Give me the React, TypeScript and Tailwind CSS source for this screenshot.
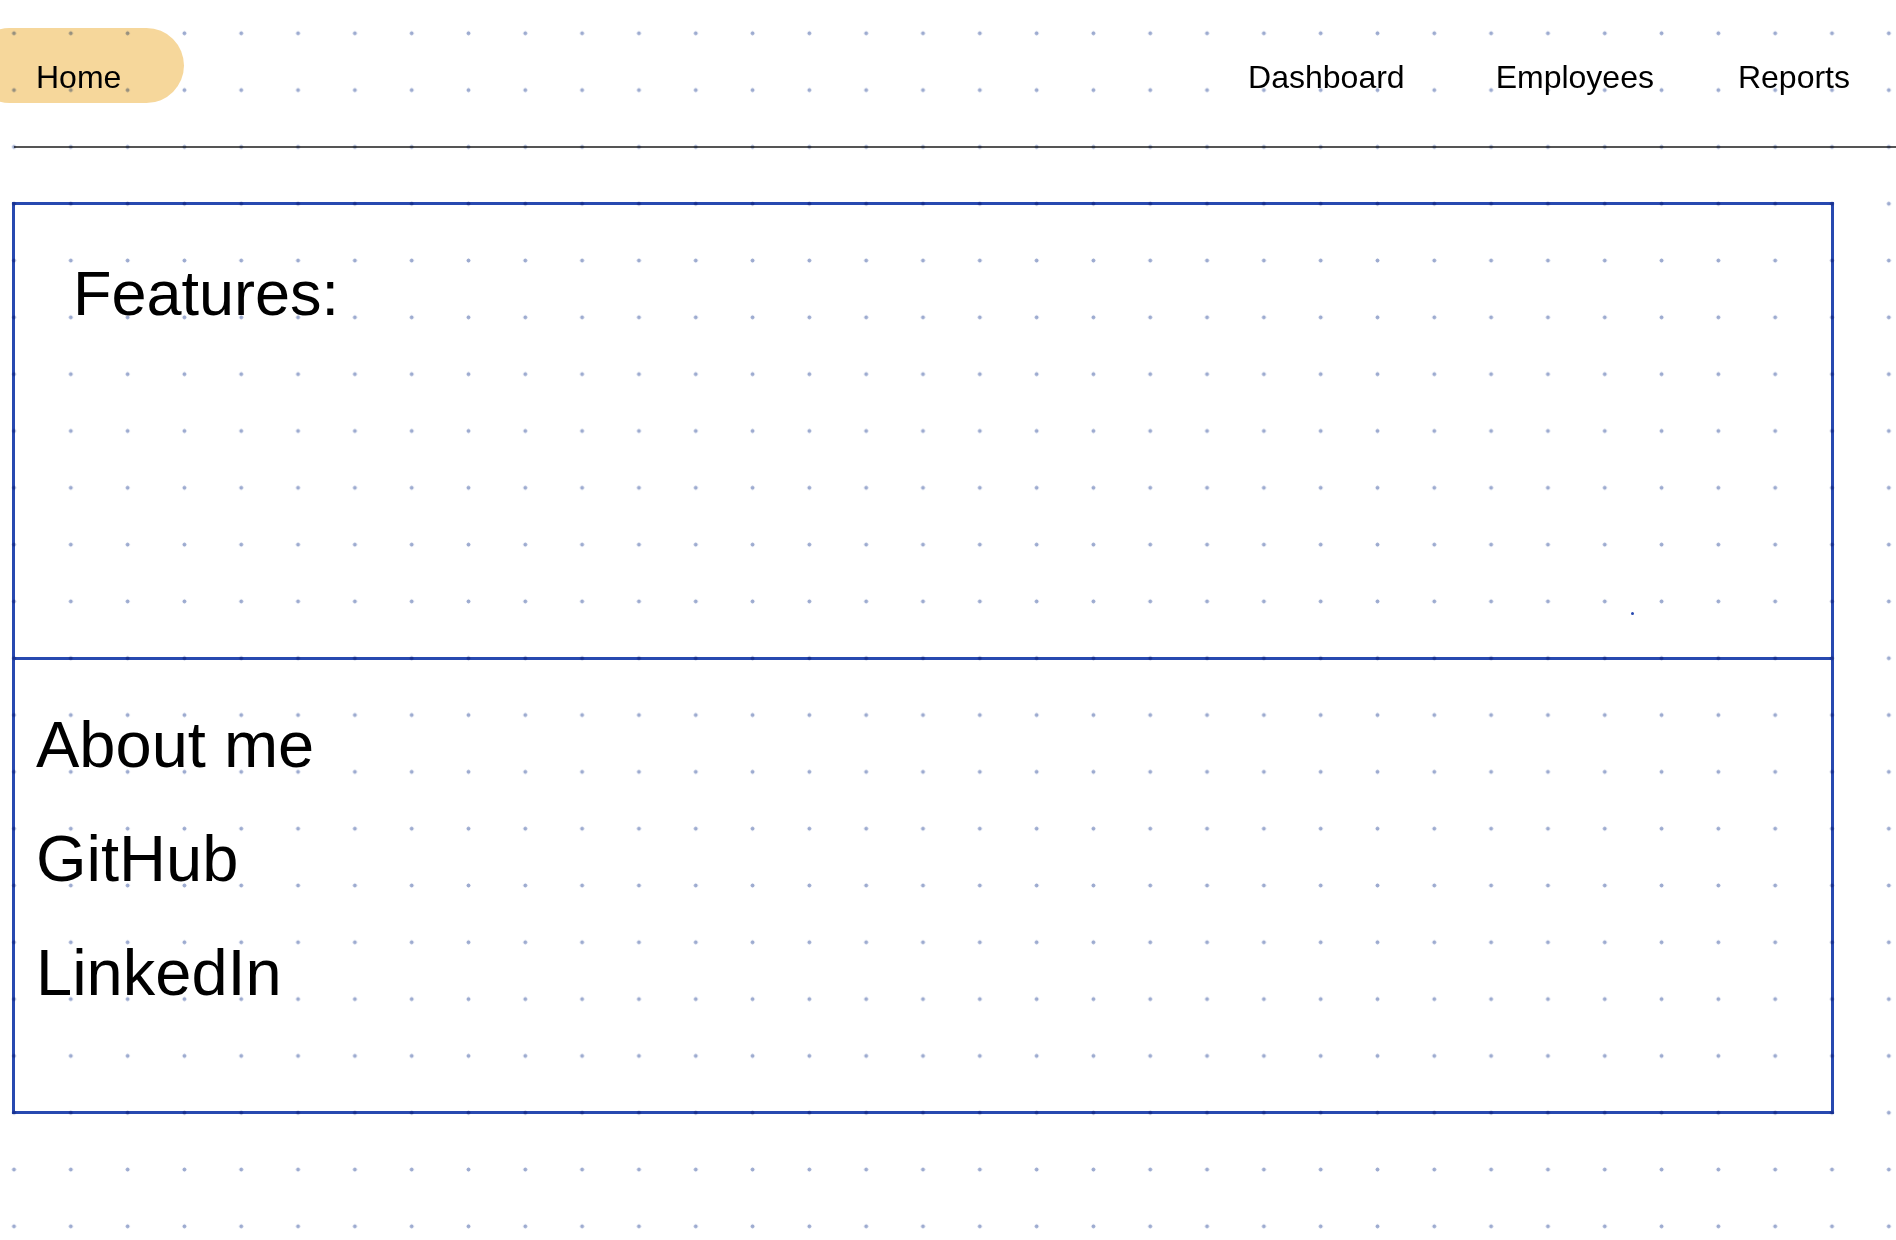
import React from 'react';

const navLinks = [
  { label: 'Dashboard', className: '' },
  { label: 'Employees', className: 'ml-[91px]' },
  { label: 'Reports', className: 'ml-[84px]' },
];

const socialLinks = ['About me', 'GitHub', 'LinkedIn'];

const App: React.FC = () => {
  return (
    <div className="relative min-h-[1240px] w-full overflow-hidden bg-white text-black font-['Liberation_Sans',Arial,Helvetica,sans-serif]">
      {/* header */}
      <header className="flex items-start">
        <a
          href="#"
          className="ml-[-28px] mt-[28px] h-[75px] rounded-full bg-[#f6d79b] pl-[64px] pr-[63px] pt-[33px] text-[32px] leading-[32px]"
        >
          Home
        </a>
        <nav className="ml-auto flex pr-[46px] pt-[61px] text-[32px] leading-[32px]">
          {navLinks.map(link => (
            <a key={link.label} href="#" className={link.className}>
              {link.label}
            </a>
          ))}
        </nav>
      </header>

      <div className="ml-[14px] mt-[43px] h-[2px] bg-[#555555]" />

      {/* main box */}
      <main className="ml-[12px] mt-[54px] w-[1822px] border-[3px] border-[#2849b0]">
        <section className="relative h-[455px] border-b-[3px] border-[#2849b0] pl-[58px] pt-[56px]">
          <h2 className="text-[63px] leading-[64px]">Features:</h2>
          <span className="absolute left-[1616px] top-[407px] h-[3px] w-[3px] rounded-full bg-[#2849b0]" />
        </section>
        <section className="h-[451px] pl-[21px] pt-[28px]">
          <ul className="text-[65px] leading-[114px]">
            {socialLinks.map(item => (
              <li key={item}>
                <a href="#">{item}</a>
              </li>
            ))}
          </ul>
        </section>
      </main>

      {/* dot grid drawn over everything */}
      <div className="pointer-events-none absolute inset-0 mix-blend-multiply bg-[radial-gradient(circle,#9dabd0_1.7px,transparent_2.3px)] bg-[size:56.82px_56.82px] bg-[position:-14.41px_4.9px]" />
    </div>
  );
};

export default App;
